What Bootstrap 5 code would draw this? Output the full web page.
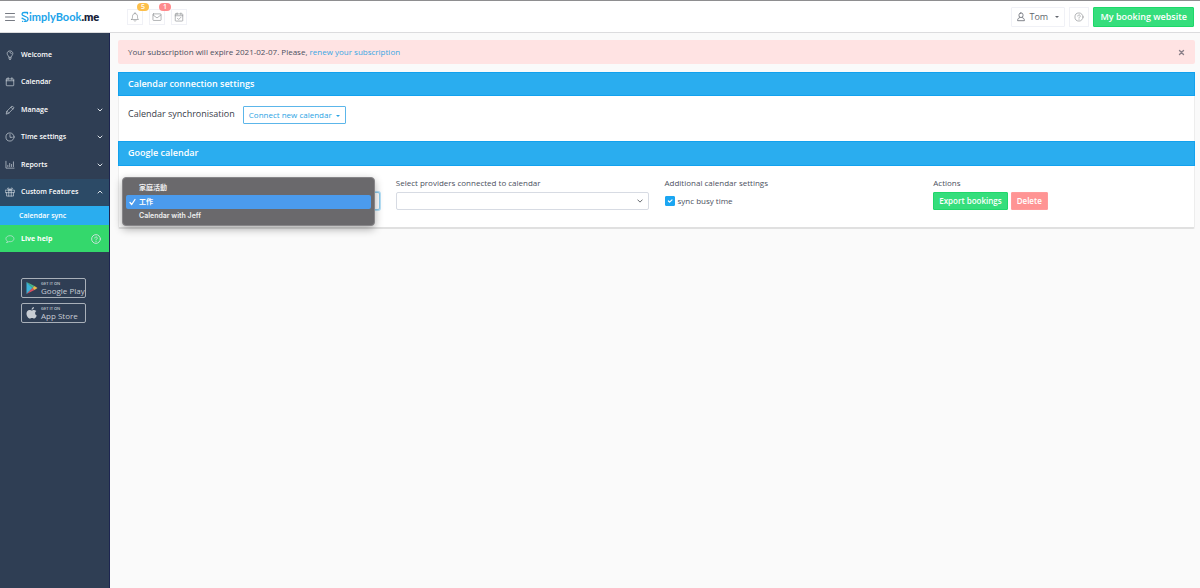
<!DOCTYPE html>
<html lang="en">
<head>
<meta charset="utf-8">
<meta name="viewport" content="width=device-width, initial-scale=1">
<title>SimplyBook.me – Calendar sync</title>
<link rel="stylesheet" href="https://cdn.jsdelivr.net/npm/bootstrap@5.3.0/dist/css/bootstrap.min.css">
<style>
:root{--sky:#2aadef;--sky-edge:#12a1ee;--green:#35de7c;--rose:#ff9494;--navy:#2f3e54;--ink:#4b5060}
body{font-family:"Open Sans","Noto Sans CJK TC",sans-serif;font-size:8px;line-height:12px;color:var(--ink);background:#fafafa}
svg{fill:none;stroke:currentColor;stroke-linecap:round;stroke-linejoin:round;flex:none;display:block}
a{text-decoration:none}
.btn{line-height:12px;border-radius:1px}
.topbar{height:33px;background:#fff;border-top:1px solid #8e8e90;border-bottom:1px solid #dcdcde;padding:0 6px 0 5px}
.burger{color:#777b83;width:10px}
.brand-name{font-family:"Lato",sans-serif;font-size:11px;font-weight:700;color:#1ba3ea;margin-left:6px;width:79px}
.brand-name b{color:#17213a;font-weight:800}
.tool{width:16px;height:16px;border:1px solid #f0f1f6;background:#fff;color:#85888c;padding:0;display:flex;align-items:center;justify-content:center}
.tools{margin-left:27px;gap:6px}
.count{position:absolute;top:-7px;left:9px;min-width:12px;height:8px;border-radius:4px;font-size:7px;line-height:8px;font-weight:600;padding:0;color:#fff}
.count.amber{background:#fcbf4b}
.count.red{background:#ff8b8d}
.user{height:20px;width:54px;border:1px solid #f0f1f6;color:#62666e;font-size:9px;padding:0 5px}
.help{width:20px;height:20px}
.site{height:20px;background:var(--green)!important;border:1px solid #1cd869;color:#fff!important;font-size:9px;font-weight:600;padding:0 6px}
.side{width:110px;background:var(--navy);color:#fff;min-height:calc(100vh - 33px);padding-top:8px;border-right:1px solid #1d2550}
.menu{height:165px}
.menu a,.sub,.live{color:#fff;font-size:7px;font-weight:600}
.menu a{height:100%;padding:0 5px}
.menu a span,.live span{margin-left:6px}
.menu svg,.live svg{color:#dce2e8}
.menu .open{background:#2c4a66}
.sub{height:19px;background:var(--sky);padding-left:19px}
.live{height:27px;background:#34d86c;padding:0 8px 0 5px;font-weight:700}
.stores{margin:26px 23px 0 21px;gap:5px}
.store{height:20px;border:1px solid #a9b0b9;border-radius:2px;color:#c8cdd4;padding:0 3px;gap:3px}
.store small{font-size:4px;line-height:5px;font-weight:600;display:block}
.store span{font-size:8px;line-height:9px;display:block;white-space:nowrap}
.content{padding:7px 5px 20px 8px;min-width:0}
.notice{background:#ffe3e3;border:0;border-radius:2px;height:24px;padding:0 10px;margin-bottom:7px;color:var(--ink);font-size:8px}
.notice a{color:#38a7e3}
.close-x{width:7px;height:7px;border:0;background:none;padding:0;color:#8b8089}
.panel{border:1px solid #ededed;border-bottom:2px solid #e0e0e0;border-radius:2px;background:#fff}
.bar{height:25px;margin:0 -1px;background:var(--sky);border:1px solid var(--sky-edge);color:#fff;font-size:9px;line-height:22px;font-weight:600;padding:0 9px}
.panel>.bar:first-child{height:24px;margin-top:-1px}
.connect-row{height:45px;padding:10px 9px 0;gap:8px}
.connect-row label{font-size:9px;line-height:16px;color:#393c49}
.connect{height:18px;border:1px solid #5cb6ea;color:#2ba3e4;font-size:8px;font-weight:500;padding:0 5px;line-height:14px}
.caret{display:inline-block;border:2px solid transparent;border-top-color:currentColor;border-bottom:0;vertical-align:middle;margin-left:2px}
.fields{--bs-gutter-x:16px;margin:0;padding:11px 0 17px}
.field-name{display:block;margin-bottom:3px;height:12px}
.pick{height:18px;min-height:0;border-radius:2px;border:1px solid #d7dbe3;padding:0 18px 0 6px;font-size:8px;line-height:14px;background-size:6px 6px;background-position:right 5px center}
.pick.focused{border:1px solid #8dcdf0;box-shadow:0 0 0 1px #b8e2f8}
.options{position:absolute;top:0;left:3px;right:13px;height:49px;background:#6a696c;border:1px solid #868588;border-radius:4px;padding:3px;box-shadow:0 3px 9px #0005;z-index:5}
.options button{display:flex;align-items:center;width:100%;height:14px;border:0;background:none;color:#f0f0f0;font-family:Inter,"Noto Sans CJK TC",sans-serif;font-size:7px;line-height:12px;font-weight:600;padding:0 0 0 13px;border-radius:2px}
.options .current{background:#4b9bed;padding-left:3px;gap:3px;color:#fff}
.tick{width:10px;height:10px;min-height:0;margin:0;border-radius:1px!important;border-color:#1ba6f2}
.tick:checked{background-color:#1ba6f2;border-color:#1ba6f2}
.busy{height:17px;gap:3px}
.act{height:18px;color:#fff!important;font-size:8px;font-weight:600;padding:0 5px;line-height:14px}
.export{background:var(--green)!important;border:1px solid #20d76b}
.remove{background:var(--rose)!important;border:1px solid #ff9b9b}
</style>
<script src="https://cdn.jsdelivr.net/npm/bootstrap@5.3.0/dist/js/bootstrap.bundle.min.js"></script>
</head>
<body>
<header class="topbar d-flex align-items-center">
  <button class="btn p-0 border-0 burger" aria-label="Menu"><svg width="10" height="10" viewBox="0 0 10 10"><path d="M.5 1.500h9M.5 5h9M.5 8.500h9"/></svg></button>
  <a href="#" class="brand-name d-flex align-items-center"><svg width="8" height="12" viewBox="0 0 8 12" stroke-width="1.300"><path d="M6.500 1.500H3C.7 1.500.5 4 2.300 4.700L5.500 6C8 7 7.300 10 5 10.300H3.500M1 7.200 4.500 9M1.500 10.300h.3M6.500 1.500v1.300"/></svg><span>implyBook<b>.me</b></span></a>
  <div class="tools d-flex">
    <button class="tool position-relative" aria-label="Notifications"><svg width="10" height="10" viewBox="0 0 16 16"><path d="M2.500 12h11c-1.500-1.400-1.500-3-1.500-5 0-2.600-1.600-4.500-4-4.500S4 4.400 4 7c0 2 0 3.600-1.500 5zM8 1v1.500M6.500 14c.5 1.200 2.500 1.200 3 0"/></svg><span class="badge count amber">5</span></button>
    <button class="tool position-relative" aria-label="Messages"><svg width="10" height="10" viewBox="0 0 16 16"><rect x="1.500" y="3" width="13" height="10.500" rx="1"/><path d="m2 5 6 4.500L14 5"/></svg><span class="badge count red">1</span></button>
    <button class="tool" aria-label="Tasks"><svg width="10" height="10" viewBox="0 0 16 16"><rect x="2" y="3" width="12" height="11.500" rx="1"/><path d="M2 6h12M5 1.500V4M11 1.500V4M5.500 10l2 2 3.500-3.500"/></svg></button>
  </div>
  <div class="ms-auto d-flex align-items-center">
    <button class="btn user d-flex align-items-center"><svg width="8" height="10" viewBox="0 0 8 10" stroke="#888b90" stroke-width=".8"><rect x="2" y="1" width="4" height="4.500" rx="1.800"/><path d="M3 5.500C1.500 6 .6 6.500.6 8.700h6.800C7.400 6.500 6.500 6 5 5.500"/></svg><span class="ms-1">Tom</span><span class="caret ms-auto"></span></button>
    <button class="tool help mx-1" aria-label="Help"><svg width="10" height="10" viewBox="0 0 16 16"><circle cx="8" cy="8" r="6.500"/><path d="M6 6.500c0-2.600 4-2.600 4 0C10 8 8 8 8 9.500M8 11.500v.2"/></svg></button>
    <button class="btn site">My booking website</button>
  </div>
</header>
<div class="d-flex">
  <nav class="side flex-shrink-0" aria-label="Main">
    <ul class="menu list-unstyled d-flex flex-column m-0">
      <li class="flex-fill"><a href="#" class="d-flex align-items-center"><svg width="10" height="10" viewBox="0 0 16 16"><path d="M6 11c0-2-2.500-2.500-2.500-5.500C3.500 3 5.500 1.500 8 1.500S12.500 3 12.500 5.500C12.500 8.500 10 9 10 11zM6 13h4M7 15h2M8 4c1.500 0 2 1 2 2"/></svg><span>Welcome</span></a></li>
      <li class="flex-fill"><a href="#" class="d-flex align-items-center"><svg width="10" height="10" viewBox="0 0 16 16"><rect x="2" y="3" width="12" height="11" rx="1"/><path d="M2 6h12M5 1v3M11 1v3"/></svg><span>Calendar</span></a></li>
      <li class="flex-fill"><a href="#" class="d-flex align-items-center"><svg width="10" height="10" viewBox="0 0 16 16"><path d="m2 14 1-4 8.500-8.500 3 3L6 13zM9.500 3.500l3 3M3 10l3 3"/></svg><span>Manage</span><svg class="ms-auto" width="8" height="8" viewBox="0 0 8 8"><path d="m2 3 2 2 2-2"/></svg></a></li>
      <li class="flex-fill"><a href="#" class="d-flex align-items-center"><svg width="10" height="10" viewBox="0 0 16 16"><circle cx="8" cy="8" r="6.500"/><path d="M8 4v4.500h3.500"/></svg><span>Time settings</span><svg class="ms-auto" width="8" height="8" viewBox="0 0 8 8"><path d="m2 3 2 2 2-2"/></svg></a></li>
      <li class="flex-fill"><a href="#" class="d-flex align-items-center"><svg width="10" height="10" viewBox="0 0 16 16"><path d="M1.500 2v11h13M4.500 10.500v-2M7.500 10.500v-5M10.500 10.500V7M13.500 10.500V3"/></svg><span>Reports</span><svg class="ms-auto" width="8" height="8" viewBox="0 0 8 8"><path d="m2 3 2 2 2-2"/></svg></a></li>
      <li class="flex-fill open"><a href="#" class="d-flex align-items-center"><svg width="10" height="10" viewBox="0 0 16 16"><path d="M1 5h14v4H1zM2.500 9v5.500h11V9M6 5v9.500M10 5v9.500M8 5C4 5 3 1.500 5 1.500S8 5 8 5s1-3.500 3-3.500S12 5 8 5"/></svg><span>Custom Features</span><svg class="ms-auto" width="8" height="8" viewBox="0 0 8 8"><path d="m2 5 2-2 2 2"/></svg></a></li>
    </ul>
    <a href="#" class="sub d-flex align-items-center">Calendar sync</a>
    <a href="#" class="live d-flex align-items-center"><svg width="10" height="10" viewBox="0 0 16 16"><path d="M3 13.500c.8-.7 1-1.500.8-2.200C.5 9.200 1 5.500 3.500 4c3-2 7.500-1.700 9.500.5 2.500 2.800 1 6.500-2.500 7.500-1.500.4-3 .4-4.300 0-.8.800-1.700 1.400-3.200 1.500z"/></svg><span>Live help</span><svg class="ms-auto" width="10" height="10" viewBox="0 0 16 16" stroke-width="1.400"><circle cx="8" cy="8" r="7"/><path d="M6 6.500c0-2.600 4-2.600 4 0C10 8 8 8 8 9.500M8 12v.2"/></svg></a>
    <div class="stores d-flex flex-column">
      <a href="#" class="store d-flex align-items-center"><svg width="13" height="14" viewBox="0 0 12 14" stroke="none"><path fill="#3bb2d8" stroke="none" d="M1 1v12l6-6z"/><path fill="#46b58a" stroke="none" d="m1 1 6 6 2-2z"/><path fill="#d95061" stroke="none" d="m1 13 6-6 2 2z"/><path fill="#e5b84c" stroke="none" d="m9 5 3 2-3 2-2-2z"/></svg><div><small>GET IT ON</small><span>Google Play</span></div></a>
      <a href="#" class="store d-flex align-items-center"><svg width="13" height="14" viewBox="0 0 12 14"><path fill="#c8cdd4" stroke="none" d="M8.400 1c.1 1.500-1 2.700-2.300 2.700C6 2.300 7.100 1.200 8.400 1zM6.300 4.500c.5 0 1.300-.7 2.400-.6 1 .1 1.700.5 2.200 1.200-1.900 1.200-1.500 3.700.4 4.500-.5 1.300-1.500 3-2.600 3-.8 0-1.200-.5-2.200-.5s-1.400.5-2.200.5C2.700 12.600.8 9.600 1 7.300c.1-2 1.400-3.300 3-3.400 1 0 1.800.6 2.300.6z"/></svg><div><small>GET IT ON</small><span>App Store</span></div></a>
    </div>
  </nav>
  <main class="content flex-fill">
    <div class="alert notice d-flex align-items-center" role="alert">
      <div>Your subscription will expire 2021-02-07. Please, <a href="#">renew your subscription</a></div>
      <button class="close-x ms-auto" aria-label="Close"><svg width="7" height="7" viewBox="0 0 7 7" stroke-width="1.400"><path d="m1.500 1.500 4 4M5.500 1.500l-4 4"/></svg></button>
    </div>
    <div class="panel mt-2">
      <h2 class="bar mb-0">Calendar connection settings</h2>
      <div class="connect-row d-flex align-items-start">
        <label for="connect">Calendar synchronisation</label>
        <button id="connect" class="btn connect">Connect new calendar <span class="caret"></span></button>
      </div>
      <h2 class="bar mb-0">Google calendar</h2>
      <div class="row fields">
        <div class="col-3 position-relative">
          <div class="field-name"></div>
          <select class="form-select pick focused" aria-label="Google calendar"><option>工作</option></select>
          <div class="options" role="listbox" aria-label="Calendars">
            <button role="option">家庭活動</button>
            <button role="option" class="current" aria-selected="true"><svg width="7" height="8" viewBox="0 0 7 8" stroke-width="1.300"><path d="m1 4.500 1.700 2L6 1.500"/></svg>工作</button>
            <button role="option">Calendar with Jeff</button>
          </div>
        </div>
        <div class="col-3">
          <label class="field-name" for="providers">Select providers connected to calendar</label>
          <select id="providers" class="form-select pick"><option></option></select>
        </div>
        <div class="col-3">
          <div class="field-name">Additional calendar settings</div>
          <div class="d-flex align-items-center busy"><input class="form-check-input tick" type="checkbox" id="busy" checked><label for="busy">sync busy time</label></div>
        </div>
        <div class="col-3">
          <div class="field-name">Actions</div>
          <div class="d-flex busy"><button class="btn act export">Export bookings</button><button class="btn act remove">Delete</button></div>
        </div>
      </div>
    </div>
  </main>
</div>
</body>
</html>
